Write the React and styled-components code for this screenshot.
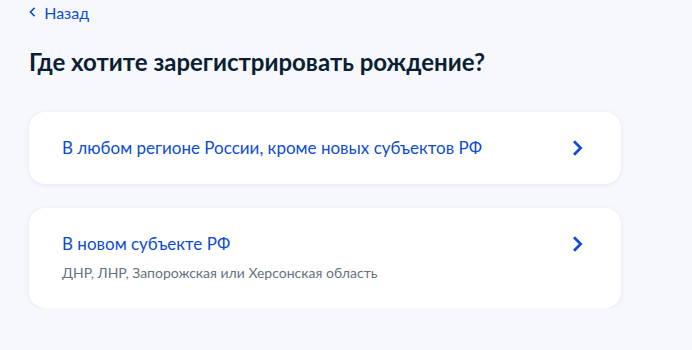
import React from "react";
import styled, { createGlobalStyle } from "styled-components";

const GlobalStyle = createGlobalStyle`
  body {
    margin: 0;
    background: #f6f8fc;
    font-family: Lato, "Noto Sans", sans-serif;
  }
`;

const Page = styled.div`
  width: 592px;
  padding: 0 0 0 29px;
`;

const BackLink = styled.a`
  display: flex;
  align-items: center;
  gap: 8px;
  height: 24px;
  color: #0d4cd3;
  font-size: 16px;
  text-decoration: none;
  cursor: pointer;
`;

const Title = styled.h1`
  margin: 22px 0 0;
  font-size: 24px;
  line-height: 32px;
  font-weight: 700;
  color: #0b1f33;
`;

const Options = styled.div`
  display: flex;
  flex-direction: column;
  gap: 24px;
  margin-top: 34px;
`;

const Card = styled.div`
  display: flex;
  align-items: flex-start;
  justify-content: space-between;
  min-height: ${(p) => p.$height}px;
  box-sizing: border-box;
  padding: 24px 38px 24px 33px;
  background: #fff;
  border-radius: 16px;
  box-shadow: 0 1px 4px rgba(160, 180, 220, 0.25);
  cursor: pointer;
`;

const CardText = styled.div`
  display: flex;
  flex-direction: column;
  gap: 7px;
`;

const CardTitle = styled.div`
  font-size: 17px;
  line-height: 24px;
  color: #0d4cd3;
`;

const CardHint = styled.div`
  font-size: 14px;
  line-height: 20px;
  color: #66727f;
`;

const ArrowBox = styled.div`
  display: flex;
  align-items: center;
  height: 24px;
`;

const Chevron = ({ size = 16, left }) => (
  <svg width={size * 0.6} height={size} viewBox="0 0 10 16" fill="none">
    <path
      d={left ? "M7 3 L2 8 L7 13" : "M2 2 L8 8 L2 14"}
      stroke="#0d4cd3"
      strokeWidth={left ? 2.2 : 2.8}
      strokeLinecap="square"
    />
  </svg>
);

const options = [
  { title: "В любом регионе России, кроме новых субъектов РФ", height: 72 },
  {
    title: "В новом субъекте РФ",
    hint: "ДНР, ЛНР, Запорожская или Херсонская область",
    height: 100,
  },
];

export default function App() {
  return (
    <>
      <GlobalStyle />
      <Page>
        <BackLink>
          <Chevron size={12} left />
          Назад
        </BackLink>
        <Title>Где хотите зарегистрировать рождение?</Title>
        <Options>
          {options.map((o) => (
            <Card key={o.title} $height={o.height}>
              <CardText>
                <CardTitle>{o.title}</CardTitle>
                {o.hint && <CardHint>{o.hint}</CardHint>}
              </CardText>
              <ArrowBox>
                <Chevron />
              </ArrowBox>
            </Card>
          ))}
        </Options>
      </Page>
    </>
  );
}
